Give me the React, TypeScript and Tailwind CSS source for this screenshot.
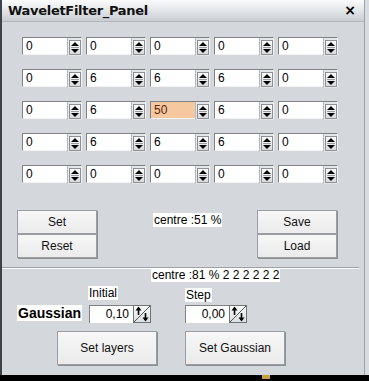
import React from "react";

const rows = [
  ["0", "0", "0", "0", "0"],
  ["0", "6", "6", "6", "0"],
  ["0", "6", "50", "6", "0"],
  ["0", "6", "6", "6", "0"],
  ["0", "0", "0", "0", "0"],
];

// small up/down spinner on the right of each field
function SpinIcon() {
  return (
    <div className="w-[14px] h-[18px] flex items-center justify-center bg-[#e4e6e9] border-l border-[#b8bcc1]">
      <div className="w-[12px] h-[15px] bg-gradient-to-b from-[#fbfbfb] to-[#d9dcdf] border border-[#8c9096] flex items-center justify-center">
        <svg width="8" height="11" viewBox="0 0 8 11">
          <polygon points="4,0 8,4 0,4" fill="#000" />
          <line x1="0" y1="5.5" x2="8" y2="5.5" stroke="#9a9ea3" strokeWidth="1" />
          <polygon points="0,7 8,7 4,11" fill="#000" />
        </svg>
      </div>
    </div>
  );
}

function SpinField({ value }: { value: string }) {
  const hot = value === "50";
  return (
    <div className="w-[60px] h-[18px] flex border-t border-l border-[#7d8186] border-b border-r border-b-[#f4f4f4] border-r-[#f4f4f4]">
      <div
        className={
          hot
            ? "flex-1 bg-[#f5c8a0] text-[#5a2410] pl-[3px] leading-[16px]"
            : "flex-1 bg-white text-black pl-[3px] leading-[16px]"
        }
      >
        {value}
      </div>
      <SpinIcon />
    </div>
  );
}

// the step spinner used by Gaussian inputs: arrows split by a diagonal
function DiagSpin() {
  return (
    <div className="w-[18px] h-[18px] bg-gradient-to-b from-[#fafafa] to-[#dcdfe2] border border-[#6f7378]">
      <svg width="16" height="16" viewBox="0 0 16 16">
        <line x1="16" y1="0" x2="0" y2="16" stroke="#555" strokeWidth="1" />
        <line x1="4.5" y1="2" x2="4.5" y2="9" stroke="#000" strokeWidth="1.6" />
        <polygon points="4.5,0.5 1.5,4.5 7.5,4.5" fill="#000" />
        <line x1="11.5" y1="7" x2="11.5" y2="14" stroke="#000" strokeWidth="1.6" />
        <polygon points="11.5,15.5 8.5,11.5 14.5,11.5" fill="#000" />
      </svg>
    </div>
  );
}

function ValueBox({ value }: { value: string }) {
  return (
    <div className="flex h-[18px]">
      <div className="w-[44px] h-[18px] bg-white border-t border-l border-[#7d8186] text-right pr-[4px] leading-[17px] text-[12px]">
        {value}
      </div>
      <DiagSpin />
    </div>
  );
}

function Btn({ label, className }: { label: string; className: string }) {
  return (
    <div
      className={
        "flex items-center justify-center bg-gradient-to-b from-[#f7f7f7] to-[#ebebeb] border border-[#9a9ea3] shadow-[1px_1px_0_#8c9095] text-[12px] text-[#111] " +
        className
      }
    >
      {label}
    </div>
  );
}

export default function App() {
  return (
    <div className="w-[369px] h-[381px] overflow-hidden flex flex-col bg-black font-['Liberation_Sans',Arial,sans-serif] text-[12px]">
      <div className="h-[375px] flex">
        {/* panel */}
        <div className="w-[365px] flex flex-col bg-[#d4d8dd] border-l-2 border-[#3d4248] border-r border-r-[#9ea3a9]">
          {/* title bar */}
          <div className="h-[22px] flex items-center justify-between pl-[6px] pr-[8px] bg-gradient-to-b from-[#fbfbfc] via-[#e3e6e9] to-[#c9cdd2] border-b border-[#b3b7bc]">
            <span className="font-bold text-[13px] text-[#111] font-['DejaVu_Sans',sans-serif] tracking-[-0.3px]">
              WaveletFilter_Panel
            </span>
            <span className="font-bold text-[14px] text-black font-['DejaVu_Sans',sans-serif]">×</span>
          </div>

          {/* filter grid */}
          <div className="pl-[20px] pt-[15px] flex flex-col gap-[14px]">
            {rows.map((r, i) => (
              <div key={i} className="flex gap-[4px]">
                {r.map((v, j) => (
                  <SpinField key={j} value={v} />
                ))}
              </div>
            ))}
          </div>

          {/* set/reset, centre, save/load */}
          <div className="flex items-start mt-[27px] pl-[15px]">
            <div className="flex flex-col w-[80px]">
              <Btn label="Set" className="h-[24px]" />
              <Btn label="Reset" className="h-[24px]" />
            </div>
            <div className="ml-[56px] w-[104px] mt-[1px]">
              <span className="bg-white px-[1px] leading-[13px]">centre :51 %</span>
            </div>
            <div className="flex flex-col w-[80px]">
              <Btn label="Save" className="h-[24px]" />
              <Btn label="Load" className="h-[24px]" />
            </div>
          </div>

          {/* separator */}
          <div className="mt-[9px] mr-[5px] border-t border-[#9da2a8] border-b border-b-white" />

          {/* gaussian section */}
          <div className="pl-[149px] h-[13px] leading-[12px]">
            <span className="bg-white px-[1px]">centre :81 % 2 2 2 2 2 2</span>
          </div>
          <div className="flex mt-[2px] h-[14px]">
            <div className="ml-[86px] w-[97px]">
              <span className="bg-white leading-[12px] px-[1px]">Initial</span>
            </div>
            <div className="mt-[2px]">
              <span className="bg-white leading-[12px] px-[1px]">Step</span>
            </div>
          </div>
          <div className="flex items-center mt-[7px] h-[18px]">
            <div className="ml-[15px] w-[72px]">
              <span className="bg-white font-bold text-[14px] leading-[16px] px-[1px]">
                Gaussian
              </span>
            </div>
            <ValueBox value="0,10" />
            <div className="ml-[34px]">
              <ValueBox value="0,00" />
            </div>
          </div>
          <div className="flex mt-[8px]">
            <Btn label="Set layers" className="ml-[55px] w-[100px] h-[34px]" />
            <Btn label="Set Gaussian" className="ml-[28px] w-[100px] h-[34px]" />
          </div>
        </div>
        {/* window behind */}
        <div className="flex-1 bg-[#d9dce0]" />
      </div>
      <div className="flex-1 bg-black flex">
        <div className="ml-[262px] w-[8px] h-[4px] bg-[#c8a040]" />
      </div>
    </div>
  );
}
